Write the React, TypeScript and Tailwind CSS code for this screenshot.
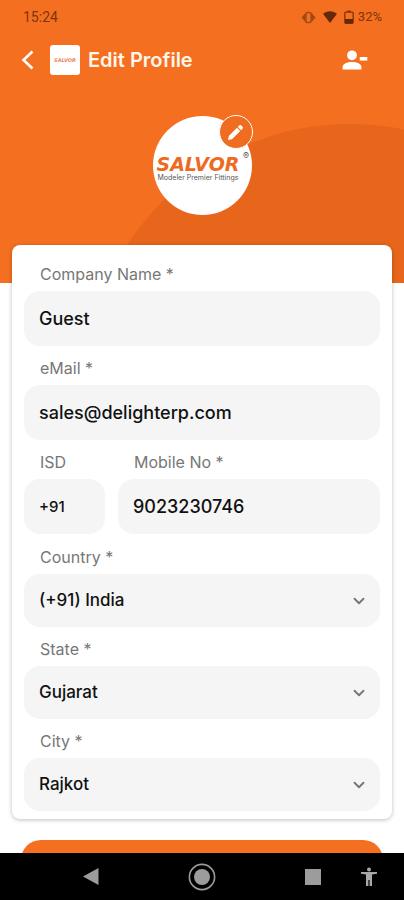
import React, { useState } from 'react';
import { ChevronDown } from 'lucide-react';

const inputClass = 'block w-full h-[55px] rounded-2xl bg-[#f5f5f5] px-[15px] text-lg font-medium text-[#111111] outline-none';

function Label({ htmlFor, children }: { htmlFor: string; children: React.ReactNode }) {
  return (
    <label htmlFor={htmlFor} className="flex h-[39px] items-center pt-1 pl-4 text-base text-[#777777]">
      {children}
    </label>
  );
}

function SelectField({ id, label, value }: { id: string; label: string; value: string }) {
  return (
    <div>
      <Label htmlFor={id}>{label}</Label>
      <div className="relative">
        <select id={id} defaultValue={value} className="block h-[53px] w-full appearance-none rounded-2xl bg-[#f5f5f5] px-[15px] text-[17px] font-medium text-[#111111] outline-none">
          <option value={value}>{value}</option>
        </select>
        <ChevronDown strokeWidth={2.5} className="pointer-events-none absolute top-[18px] right-3 h-[18px] w-[18px] text-[#777777]" />
      </div>
    </div>
  );
}

function StatusBar() {
  return (
    <div className="flex h-[34px] items-center justify-between pr-[22px] pl-[23px] font-['Roboto',sans-serif] text-[14px] text-[#7d3509]">
      <span>15:24</span>
      <div className="flex items-center gap-[7px]">
        <svg className="h-[13px] w-[15px]" viewBox="0 0 15 13" fill="none">
          <path d="M4 2.5 0.5 6.5l3.5 4zM11 2.5l3.5 4-3.5 4z" fill="#a04a12" />
          <rect x="4.8" y="1.5" width="5.4" height="10" rx="2" fill="#f46f20" stroke="#a04a12" strokeWidth="1.6" />
        </svg>
        <svg className="h-3 w-[14px]" viewBox="0 0 14 12">
          <path d="M0 2.8C4 -0.6 10 -0.6 14 2.8L7 12z" fill="#65290a" />
        </svg>
        <div className="flex items-center gap-1">
          <svg className="h-[14px] w-[10px]" viewBox="0 0 10 14" fill="none">
            <path d="M3.2 0.6h3.6v1.6H3.2z" fill="#7d3509" />
            <rect x="0.8" y="2.1" width="8.4" height="11.2" rx="1.2" stroke="#7d3509" strokeWidth="1.3" />
            <path d="M1 9h8v4.3H1z" fill="#65290a" />
          </svg>
          <span className="text-[13px]">32%</span>
        </div>
      </div>
    </div>
  );
}

export default function EditProfile() {
  const [company, setCompany] = useState('Guest');
  const [email, setEmail] = useState('sales@delighterp.com');
  const [isd, setIsd] = useState('+91');
  const [mobile, setMobile] = useState('9023230746');

  return (
    <div className="flex h-screen flex-col overflow-hidden bg-white font-['Inter',sans-serif]">
      <main className="min-h-0 flex-1 overflow-hidden">
        <header className="relative h-[283px] overflow-hidden bg-[#f46f20]">
          <div className="absolute top-[124px] -right-[212px] h-[532px] w-[532px] rounded-full bg-[#e7661c]" />
          <div className="relative">
            <StatusBar />

            <div className="flex h-[52px] items-center pr-9 pl-[21px]">
              <button type="button" aria-label="Back" className="mr-4">
                <svg className="h-5 w-[13px]" viewBox="0 0 13 20" fill="none" stroke="#ffffff" strokeWidth="2.6">
                  <path d="M11.5 1.5 2.5 10l9 8.5" />
                </svg>
              </button>
              <div className="flex h-[30px] w-[30px] items-center justify-center rounded-[3px] bg-white">
                <svg className="h-2 w-6" viewBox="0 0 96 32">
                  <text x="48" y="24" textAnchor="middle" fontFamily="DejaVu Sans, sans-serif" fontSize="20" fontWeight="700" fontStyle="italic" fill="#ee8358">SALVOR</text>
                </svg>
              </div>
              <h1 className="ml-2 text-xl font-semibold text-[#fff6ec]">Edit Profile</h1>
              <button type="button" aria-label="Remove profile" className="ml-auto">
                <svg className="h-5 w-[26px]" viewBox="0 0 26 20" fill="#ffffff">
                  <circle cx="10" cy="5.3" r="4.9" />
                  <path d="M0.6 19.4v-2.2C0.6 13.6 5.4 12 10 12s9.4 1.600 9.4 5.200v2.200z" />
                  <path d="M17.7 7h7.600v3.600h-7.600z" />
                </svg>
              </button>
            </div>

            <div className="relative mx-auto mt-[30px] h-[99px] w-[99px]">
              <div className="flex h-full w-full items-center justify-center rounded-full bg-white">
                <svg className="h-10 w-full" viewBox="0 0 99 40">
                  <text x="45" y="25" textAnchor="middle" fontFamily="DejaVu Sans, sans-serif" fontSize="19" fontWeight="700" fontStyle="italic" fill="#ee6a1f">SALVOR</text>
                  <text x="45" y="34" textAnchor="middle" fontFamily="Inter, sans-serif" fontSize="7" fill="#555555">Modeler Premier Fittings</text>
                  <text x="90" y="13" fontFamily="Inter, sans-serif" fontSize="9" fill="#555555">®</text>
                </svg>
              </div>
              <button type="button" aria-label="Change photo" className="absolute -top-px -right-px flex h-[34px] w-[34px] items-center justify-center rounded-full border border-white bg-[#f06c20]">
                <svg className="h-[17px] w-[17px]" viewBox="0 0 17 17" fill="#ffffff">
                  <path d="M1 16l0.8-4 8.200-8.200 3.200 3.200-8.200 8.200zM10.800 3l1.700-1.700c0.500-0.500 1-0.500 1.500 0l1.700 1.700c0.500 0.500 0.500 1 0 1.500l-1.700 1.700z" />
                </svg>
              </button>
            </div>
          </div>
        </header>

        <form onSubmit={(e) => e.preventDefault()}>
          <div className="relative mx-3 -mt-[38px] rounded-lg bg-white px-3 pt-[7px] pb-2 shadow-[0_1px_4px_rgba(0,0,0,0.25)]">
            <Label htmlFor="company">Company Name *</Label>
            <input id="company" type="text" value={company} onChange={(e) => setCompany(e.target.value)} className={inputClass} />

            <Label htmlFor="email">eMail *</Label>
            <input id="email" type="email" value={email} onChange={(e) => setEmail(e.target.value)} className={inputClass} />

            <div className="flex gap-[13px]">
              <div className="w-[81px] shrink-0">
                <Label htmlFor="isd">ISD</Label>
                <input id="isd" type="text" value={isd} onChange={(e) => setIsd(e.target.value)} className="block h-[55px] w-full rounded-2xl bg-[#f5f5f5] px-[15px] text-[15px] font-medium text-[#111111] outline-none" />
              </div>
              <div className="min-w-0 flex-1">
                <Label htmlFor="mobile">Mobile No *</Label>
                <input id="mobile" type="tel" value={mobile} onChange={(e) => setMobile(e.target.value)} className={inputClass} />
              </div>
            </div>

            <div className="pt-px">
              <SelectField id="country" label="Country *" value="(+91) India" />
              <SelectField id="state" label="State *" value="Gujarat" />
              <SelectField id="city" label="City *" value="Rajkot" />
            </div>
          </div>

          <div className="px-[21px] pt-[21px]">
            <button type="submit" aria-label="Save" className="block h-14 w-full rounded-[20px] bg-[#f46f20]" />
          </div>
        </form>
      </main>

      <nav className="grid h-[47px] shrink-0 grid-cols-6 bg-black pr-[7px] pl-[63px]">
        <button type="button" aria-label="Back" className="col-start-1 flex items-center justify-center">
          <svg className="h-[17px] w-4" viewBox="0 0 16 17" fill="#9c9c9c"><path d="M0 8.5 15.5 0v17z" /></svg>
        </button>
        <button type="button" aria-label="Home" className="col-start-3 flex items-center justify-center">
          <svg className="h-7 w-7" viewBox="0 0 28 28">
            <circle cx="14" cy="14" r="12.6" fill="none" stroke="#9c9c9c" strokeWidth="1.6" />
            <circle cx="14" cy="14" r="8" fill="#9c9c9c" />
          </svg>
        </button>
        <button type="button" aria-label="Recent apps" className="col-start-5 flex items-center justify-center">
          <span className="h-4 w-4 bg-[#9c9c9c]" />
        </button>
        <button type="button" aria-label="Accessibility" className="col-start-6 flex items-center justify-center">
          <svg className="h-5 w-4" viewBox="0 0 16 20" fill="#a8a8a8">
            <circle cx="8" cy="2.4" r="2" />
            <path d="M0 5h16v1.8l-5 0.700V19H8.600v-6H7.400v6H5V7.500l-5-0.700z" />
          </svg>
        </button>
      </nav>
    </div>
  );
}
